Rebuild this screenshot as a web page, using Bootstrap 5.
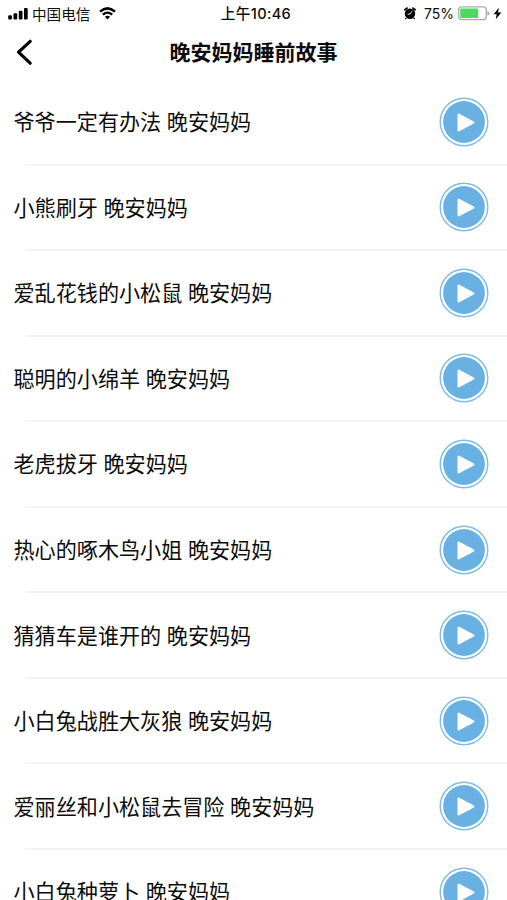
<!DOCTYPE html>
<html lang="zh-CN">
<head>
<meta charset="utf-8">
<meta name="viewport" content="width=device-width, initial-scale=1">
<title>晚安妈妈睡前故事</title>
<link rel="stylesheet" href="https://cdn.jsdelivr.net/npm/bootstrap@5.3.0/dist/css/bootstrap.min.css">
<style>
body{font-family:"Noto Sans CJK SC",sans-serif;color:#0c0c0c;height:900px}
.status-strip{height:27px;font-size:14.6px;line-height:27px;display:grid;grid-template-columns:1fr auto 1fr;padding:0 5px 0 8px}
.clock-text{font-weight:500;font-size:14.6px;letter-spacing:.35px;padding-top:1px;padding-left:2px;line-height:26px;font-family:Inter,"Noto Sans CJK SC",sans-serif}
.power-text{font-family:Inter,"Noto Sans CJK SC",sans-serif;font-size:14px}
.title-strip{height:52px;display:grid;grid-template-columns:60px 1fr 60px}
.page-title{font-size:21px;font-weight:700;line-height:49px}
.story-row{height:85.55px;padding:0 18px 0 13.5px}
.story-row + .story-row::before{content:"";position:absolute;left:25px;right:0;top:-1px;height:2px;background:#f3f3f3}
.story-name{font-size:21.1px;line-height:30px;white-space:nowrap;word-spacing:.9px;padding-bottom:1px}
svg{display:block;flex:none}
</style>
</head>
<body class="bg-white overflow-hidden">
<header>
  <div class="status-strip">
    <div class="d-flex align-items-center">
      <svg width="21" height="12" viewBox="0 0 21 12"><rect x=".2" y="7.3" width="3.7" height="4.3" rx="1"/><rect x="5.5" y="5.2" width="3.7" height="6.4" rx="1"/><rect x="10.8" y="2.8" width="3.7" height="8.8" rx="1"/><rect x="16" y="0" width="3.7" height="11.6" rx="1"/></svg>
      <span style="margin-left:3px">中国电信</span>
      <svg style="margin-left:9px" width="17" height="13" viewBox="0 0 17 13" fill="none" stroke="#000"><path d="M1 4.6Q8.5-1.8 16 4.6" stroke-width="2.5"/><path d="M3.8 7.6q4.7-3.9 9.4 0" stroke-width="2.2"/><path d="M8.5 12.4 5.9 9.8q2.6-1.9 5.2 0z" fill="#000" stroke="none"/></svg>
    </div>
    <div class="clock-text">上午10:46</div>
    <div class="d-flex align-items-center justify-content-end power-text">
      <svg width="12" height="13" viewBox="0 0 12 13"><circle cx="6" cy="6.8" r="5.2"/><path d="M.9 2.8 3 1.1M11.1 2.8 9 1.1" stroke="#000" stroke-width="1.8" stroke-linecap="round"/><path d="M2.3 11l-1 1M9.7 11l1 1" stroke="#000" stroke-width="1.2"/><path d="M8 4.2 6 7.1H3.6" fill="none" stroke="#fff" stroke-width=".9"/></svg>
      <span class="ms-2">75%</span>
      <svg class="ms-1" width="32" height="15" viewBox="0 0 32 15"><rect x=".7" y=".9" width="27.5" height="12.8" rx="3" fill="#fff" stroke="#aaa" stroke-width="1.3"/><rect x="2.2" y="2.5" width="18" height="9.6" rx="1" fill="#4fd964"/><path d="M29.4 5v4.6q2-.7 2-2.3T29.4 5" fill="#aaa"/></svg>
      <svg style="margin-left:3px" width="9" height="13" viewBox="0 0 9 13"><path d="M5.9.8.6 7.3h3.1L2.8 12.2 8.4 5.5H5.1z"/></svg>
    </div>
  </div>
  <div class="title-strip">
    <a href="#" class="d-flex align-items-center ps-3" aria-label="返回"><svg width="17" height="28" viewBox="0 0 17 28" fill="none" stroke="#000" stroke-width="3.2" stroke-linecap="round" stroke-linejoin="round"><path d="M14.2 2.3 2.5 13.2 14.2 24.2"/></svg></a>
    <h1 class="page-title text-center m-0">晚安妈妈睡前故事</h1>
  </div>
</header>
<svg class="d-none"><symbol id="play" viewBox="0 0 50 50"><circle cx="25" cy="25" r="23.8" fill="#fff" stroke="#7ebce5" stroke-width="1.4"/><circle cx="25" cy="25" r="20.9" fill="#68b1e2"/><path d="M19.7 17.7v15.6L34.3 25.5z" fill="#fff" stroke="#fff" stroke-width="2.4" stroke-linejoin="round"/></symbol></svg>
<main>
  <div class="story-row position-relative d-flex align-items-center justify-content-between"><span class="story-name">爷爷一定有办法 晚安妈妈</span><svg width="50" height="50"><use href="#play"/></svg></div>
  <div class="story-row position-relative d-flex align-items-center justify-content-between"><span class="story-name">小熊刷牙 晚安妈妈</span><svg width="50" height="50"><use href="#play"/></svg></div>
  <div class="story-row position-relative d-flex align-items-center justify-content-between"><span class="story-name">爱乱花钱的小松鼠 晚安妈妈</span><svg width="50" height="50"><use href="#play"/></svg></div>
  <div class="story-row position-relative d-flex align-items-center justify-content-between"><span class="story-name">聪明的小绵羊 晚安妈妈</span><svg width="50" height="50"><use href="#play"/></svg></div>
  <div class="story-row position-relative d-flex align-items-center justify-content-between"><span class="story-name">老虎拔牙 晚安妈妈</span><svg width="50" height="50"><use href="#play"/></svg></div>
  <div class="story-row position-relative d-flex align-items-center justify-content-between"><span class="story-name">热心的啄木鸟小姐 晚安妈妈</span><svg width="50" height="50"><use href="#play"/></svg></div>
  <div class="story-row position-relative d-flex align-items-center justify-content-between"><span class="story-name">猜猜车是谁开的 晚安妈妈</span><svg width="50" height="50"><use href="#play"/></svg></div>
  <div class="story-row position-relative d-flex align-items-center justify-content-between"><span class="story-name">小白兔战胜大灰狼 晚安妈妈</span><svg width="50" height="50"><use href="#play"/></svg></div>
  <div class="story-row position-relative d-flex align-items-center justify-content-between"><span class="story-name">爱丽丝和小松鼠去冒险 晚安妈妈</span><svg width="50" height="50"><use href="#play"/></svg></div>
  <div class="story-row position-relative d-flex align-items-center justify-content-between"><span class="story-name">小白兔种萝卜 晚安妈妈</span><svg width="50" height="50"><use href="#play"/></svg></div>
</main>
<script src="https://cdn.jsdelivr.net/npm/bootstrap@5.3.0/dist/js/bootstrap.bundle.min.js"></script>
</body>
</html>
